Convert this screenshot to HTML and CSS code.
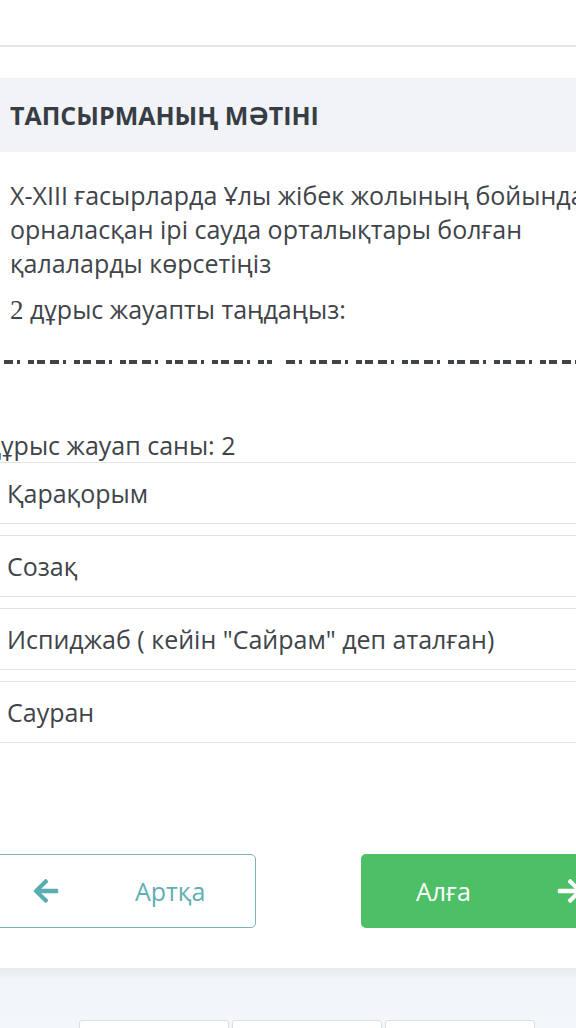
FILE: index.html
```html
<!DOCTYPE html>
<html lang="kk">
<head>
  <meta charset="UTF-8" />
  <meta name="viewport" content="width=device-width, initial-scale=1" />
  <title>Тапсырма</title>
  <link rel="stylesheet" href="styles.css">
</head>
<body>
  <div class="topbar"></div>

  <section class="task">
    <h2 class="task-title">ТАПСЫРМАНЫҢ МӘТІНІ</h2>

    <div class="task-body">
      <p class="question">X-XIII ғасырларда Ұлы жібек жолының бойында<br>орналасқан ірі сауда орталықтары болған<br>қалаларды көрсетіңіз</p>
      <p class="hint"><span class="num">2</span> дұрыс жауапты таңдаңыз:</p>

      <div class="blank">
        <span class="dash dash-a"></span>
        <span class="dash dash-b"></span>
      </div>

      <div class="count">Дұрыс жауап саны: 2</div>
      <ul class="options">
        <li>Қарақорым</li>
        <li>Созақ</li>
        <li>Испиджаб ( кейін "Сайрам" деп аталған)</li>
        <li>Сауран</li>
      </ul>
    </div>

    <div class="nav">
      <button class="btn btn-back">
        <svg viewBox="0 0 448 512" class="ico"><path d="M257.5 445.1l-22.2 22.2c-9.4 9.4-24.6 9.4-33.9 0L7 273c-9.4-9.4-9.4-24.6 0-33.9L201.4 44.7c9.4-9.4 24.6-9.4 33.9 0l22.2 22.2c9.5 9.5 9.3 25-.4 34.3L136.6 216H424c13.3 0 24 10.7 24 24v32c0 13.3-10.7 24-24 24H136.6l120.5 114.8c9.8 9.3 10 24.8.4 34.3z"/></svg>
        <span>Артқа</span>
      </button>
      <button class="btn btn-next">
        <span>Алға</span>
        <svg viewBox="0 0 448 512" class="ico"><path d="M190.5 66.9l22.2-22.2c9.4-9.4 24.6-9.4 33.9 0L441 239c9.4 9.4 9.4 24.6 0 33.9L246.6 467.3c-9.4 9.4-24.6 9.4-33.9 0l-22.2-22.2c-9.5-9.5-9.3-25 .4-34.3L311.4 296H24c-13.3 0-24-10.7-24-24v-32c0-13.3 10.7-24 24-24h287.4L190.9 101.2c-9.8-9.3-10-24.8-.4-34.3z"/></svg>
      </button>
    </div>
  </section>

  <footer class="footer">
    <div class="tabs">
      <div class="tab"><i class="dot"></i><b></b></div>
      <div class="tab"><i class="dot"></i><b></b></div>
      <div class="tab"><i class="dot"></i><b></b></div>
    </div>
  </footer>
</body>
</html>
```

FILE: styles.css
```css
html, body {
  margin: 0;
  height: 1028px;
  overflow: hidden;
}
body {
  font-family: 'Open Sans', 'Noto Sans', sans-serif;
  background: #fff;
  color: #3d4147;
}
.topbar {
  height: 45px;
  border-bottom: 2px solid #e4e5e7;
}
.task {
  padding-top: 31px;
}
.task-title {
  margin: 0;
  height: 74px;
  display: flex;
  align-items: center;
  padding-left: 10px;
  background: #f1f3f6;
  color: #383d45;
  font-size: 25px;
  font-weight: 700;
}
.task-body {
  padding-top: 26px;
}
.question {
  margin: 0;
  padding-left: 10px;
  font-size: 25px;
  line-height: 34px;
  white-space: nowrap;
  color: #404449;
}
.hint {
  margin: 12px 0 0;
  padding-left: 10px;
  font-size: 25px;
  line-height: 34px;
  color: #404449;
}
.num {
  font-family: 'Liberation Serif', 'DejaVu Serif', serif;
  font-size: 27px;
  line-height: 0;
}
.blank {
  display: flex;
  gap: 14px;
  margin-top: 34px;
  height: 4px;
}
.dash {
  display: block;
  height: 4px;
  background: repeating-linear-gradient(90deg,
    #404348 0 9px, transparent 9px 13px,
    #404348 13px 16px, transparent 16px 24px,
    #404348 24px 30px, transparent 30px 33px,
    #404348 33px 41px, transparent 41px 46px);
}
.dash-a { width: 268px; margin-left: 4px; }
.dash-b { flex: 1; }
.count {
  margin: 64px 0 0 -16px;
  font-size: 25px;
  line-height: 34px;
  color: #404449;
}
.options {
  list-style: none;
  margin: 0;
  padding: 0;
  display: flex;
  flex-direction: column;
  gap: 11px;
}
.options li {
  height: 60px;
  display: flex;
  align-items: center;
  padding-left: 7px;
  border-top: 1px solid #e2e3e5;
  border-bottom: 1px solid #e2e3e5;
  font-size: 25px;
  color: #404449;
}
.nav {
  display: flex;
  justify-content: space-between;
  margin-top: 111px;
  padding-bottom: 40px;
}
.btn {
  height: 74px;
  border-radius: 5px;
  font-family: inherit;
  font-size: 25px;
  display: flex;
  align-items: center;
  cursor: pointer;
}
.btn .ico {
  width: 26px;
  height: 28px;
}
.btn-back {
  width: 276px;
  margin-left: -20px;
  background: #fff;
  border: 1px solid #7fb2b5;
  color: #5fb0b3;
  padding: 0 0 0 52px;
  gap: 76px;
}
.btn-back .ico { fill: #5aaeb1; }
.btn-next {
  width: 240px;
  margin-right: -25px;
  background: #4dbf66;
  border: none;
  color: #fff;
  padding: 0 0 0 55px;
  gap: 86px;
}
.btn-next .ico { fill: #fff; }
.footer {
  height: 80px;
  background: linear-gradient(#e8ebee, #f3f6f9 12px, #f5f8fb);
  padding-top: 52px;
}
.tabs {
  display: flex;
  gap: 3px;
  padding-left: 79px;
}
.tab {
  width: 150px;
  height: 40px;
  box-sizing: border-box;
  background: #fff;
  border: 1px solid #dcdfe2;
  border-radius: 3px;
  display: flex;
  align-items: center;
  padding: 0 10px;
  gap: 20px;
}
.dot {
  width: 14px;
  height: 14px;
  border-radius: 50%;
  background: #f08a8a;
}
.tab b {
  flex: 1;
  height: 8px;
  background: #e4e6e9;
}
```
